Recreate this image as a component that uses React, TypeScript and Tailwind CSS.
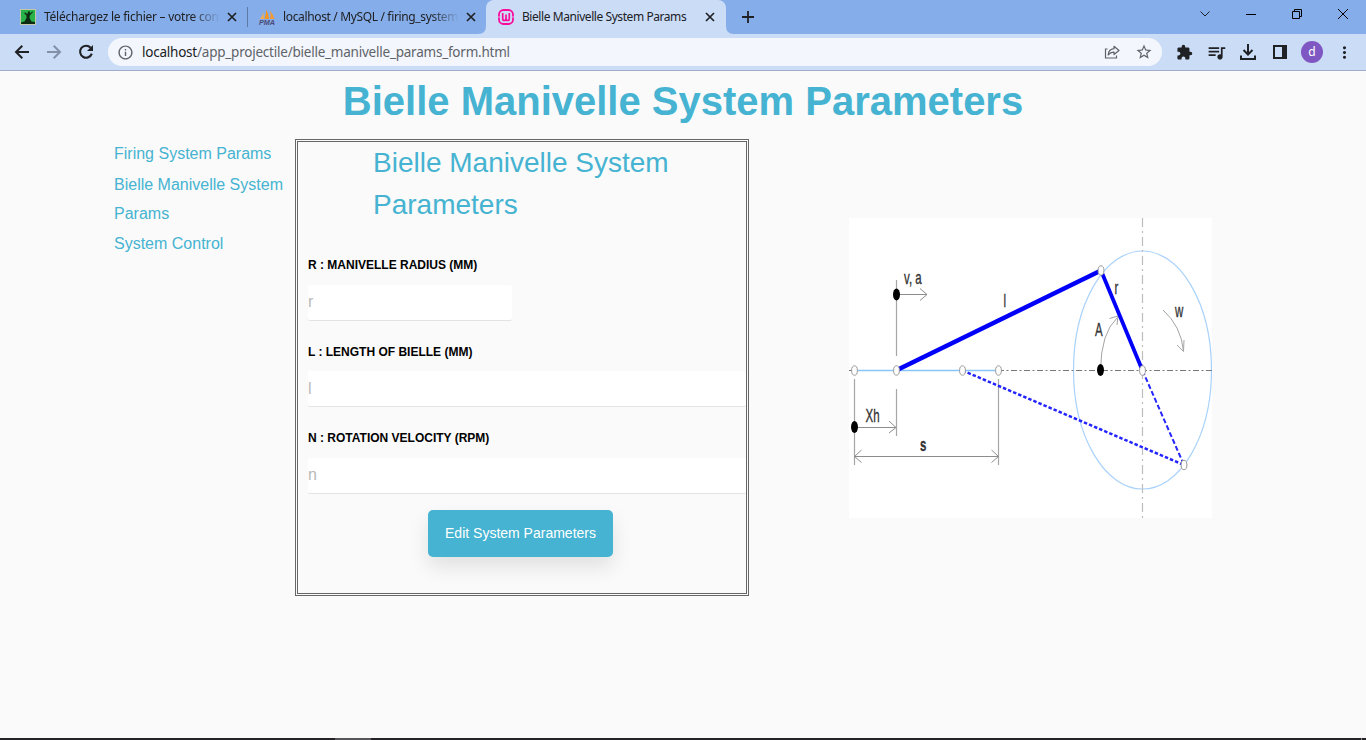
import type { ReactNode } from "react";
import { MdInfoOutline, MdStarBorder, MdExtension, MdQueueMusic, MdMoreVert } from "react-icons/md";

function CloseIcon({ className = "" }: { className?: string }) {
  return (
    <svg viewBox="0 0 10 10" className={`h-[10px] w-[10px] shrink-0 ${className}`}>
      <path d="M1 1L9 9M9 1L1 9" stroke="#202124" strokeWidth="1.7" />
    </svg>
  );
}

function PersonFavicon() {
  return (
    <svg viewBox="0 0 16 16" className="h-4 w-4 shrink-0">
      <rect width="16" height="16" fill="#c3c9a8" />
      <rect x="1" y="1" width="14" height="14" fill="#27b34a" />
      <path d="M4 4L5 3.500L7.500 5L8 2.500H10L9.800 4.500L12.500 2.500L13 3L9.800 6.500L9.500 9L11.500 12.500L15 13V15H1V13.500L4.500 12.500L6.500 9L6.500 6.500Z" fill="#0c2b12" />
    </svg>
  );
}

function PmaFavicon() {
  return (
    <svg viewBox="0 0 16 16" className="h-4 w-4 shrink-0">
      <path d="M1 10Q4 6 4.500 3L5 10Z" fill="#f3ab55" />
      <path d="M5.500 10Q7.500 5 7 0.500Q10 5 10 10Z" fill="#f7941d" />
      <path d="M11 10Q12 6 11 1.500Q14.500 6 15.500 10Z" fill="#f09a3c" />
      <text x="0" y="15.500" textLength="16" lengthAdjust="spacingAndGlyphs" fontFamily="Liberation Sans" fontSize="6.500" fontWeight="700" fontStyle="italic" fill="#4a4a78">
        PMA
      </text>
    </svg>
  );
}

function WampFavicon() {
  return (
    <svg viewBox="0 0 16 16" className="h-4 w-4 shrink-0" fill="none" stroke="#fb0a9b">
      <rect x="1" y="1" width="14" height="14" rx="4.500" strokeWidth="1.800" />
      <path d="M0 8H2.500M13.500 8H16" stroke="#cbdcf7" strokeWidth="0.800" />
      <path d="M4.700 4V9.500Q4.700 11.500 6.300 11.500Q8 11.500 8 9.500V5.500M8 9.500Q8 11.500 9.700 11.500Q11.300 11.500 11.300 9.500V4" strokeWidth="1.700" />
    </svg>
  );
}

function ShareIcon() {
  return (
    <svg viewBox="0 0 16 16" className="h-4 w-4" fill="none" stroke="#5f6368" strokeWidth="1.200">
      <path d="M3.500 5H1.500V14H12.500V11.500" />
      <path d="M10 2.300L15 6.500L10 10.500V8.200Q6.500 8 4.200 11Q4.500 5.300 10 4.700Z" strokeLinejoin="round" />
    </svg>
  );
}

function Cell({ children }: { children: ReactNode }) {
  return <div className="flex w-8 shrink-0 items-center justify-center">{children}</div>;
}

function TabStrip() {
  return (
    <div className="flex h-[34px] bg-[#85ade9] text-[12px] text-[#202124]">
      <div className="flex w-[248px] items-center pl-5">
        <PersonFavicon />
        <div className="ml-2 w-[176px] shrink-0 overflow-hidden whitespace-nowrap tracking-[-0.25px] [mask-image:linear-gradient(to_right,black_84%,transparent)]">
          Téléchargez le fichier – votre conv
        </div>
        <CloseIcon className="ml-[7px]" />
        <div className="ml-[10px] h-5 w-px shrink-0 bg-[#5d7ba9]" />
      </div>
      <div className="flex w-[238px] items-center pl-[11px]">
        <PmaFavicon />
        <div className="ml-2 w-[176px] overflow-hidden whitespace-nowrap tracking-[-0.35px] [mask-image:linear-gradient(to_right,black_84%,transparent)]">
          localhost / MySQL / firing_system
        </div>
        <CloseIcon className="ml-[7px]" />
      </div>
      <div className="relative flex w-[240px] items-center rounded-t-[8px] bg-[#cbdcf7] pl-3">
        <svg viewBox="0 0 8 8" className="absolute bottom-0 -left-2 h-2 w-2">
          <path d="M8 0V8H0Q8 8 8 0Z" fill="#cbdcf7" />
        </svg>
        <svg viewBox="0 0 8 8" className="absolute -right-2 bottom-0 h-2 w-2">
          <path d="M0 0V8H8Q0 8 0 0Z" fill="#cbdcf7" />
        </svg>
        <WampFavicon />
        <div className="ml-2 w-[176px] whitespace-nowrap tracking-[-0.43px]">Bielle Manivelle System Params</div>
        <CloseIcon className="ml-[7px]" />
      </div>
      <div className="flex grow items-center pl-4">
        <svg viewBox="0 0 12 12" className="h-3 w-3">
          <path d="M6 0V12M0 6H12" stroke="#202124" strokeWidth="1.800" />
        </svg>
      </div>
      <div className="flex h-7 items-center">
        <div className="flex w-[46px] justify-center">
          <svg viewBox="0 0 10 6" className="h-[6px] w-[10px]">
            <path d="M0.500 0.500L5 5L9.500 0.500" fill="none" stroke="#202124" />
          </svg>
        </div>
        <div className="flex w-[46px] justify-center">
          <div className="h-px w-[10px] bg-black" />
        </div>
        <div className="flex w-[46px] justify-center">
          <svg viewBox="0 0 10 10" className="h-[10px] w-[10px]" fill="none" stroke="#000">
            <path d="M0.500 2.500H7.500V9.500H0.500ZM2.500 2.500V0.500H9.500V7.500H7.500" />
          </svg>
        </div>
        <div className="flex w-[46px] justify-center">
          <svg viewBox="0 0 10 10" className="h-[10px] w-[10px]">
            <path d="M0 0L10 10M10 0L0 10" stroke="#000" />
          </svg>
        </div>
      </div>
    </div>
  );
}

function Toolbar() {
  return (
    <div className="flex h-[37px] border-b border-[#9fadc9] bg-[#cbdcf7] pl-[6px] text-[#202124]">
      <Cell>
        <svg viewBox="0 0 16 16" className="h-4 w-4" fill="none" stroke="#202124" strokeWidth="2">
          <path d="M15 8H2.500M8.300 1.700L2 8L8.300 14.300" />
        </svg>
      </Cell>
      <Cell>
        <svg viewBox="0 0 16 16" className="h-4 w-4" fill="none" stroke="#8290a8" strokeWidth="2">
          <path d="M1 8H13.500M7.700 1.700L14 8L7.700 14.300" />
        </svg>
      </Cell>
      <Cell>
        <svg viewBox="0 0 16 16" className="h-4 w-4" fill="none" stroke="#202124" strokeWidth="2.100">
          <path d="M12.600 3.700A6 6 0 1 0 13.800 9.600" />
          <path d="M15 1V7H9Z" fill="#202124" stroke="none" />
        </svg>
      </Cell>
      <div className="my-1 ml-[6px] flex h-7 w-[1054px] items-center rounded-full bg-[#f3f7fd] pl-[9px]">
        <MdInfoOutline size={17} className="text-[#5f6368]" />
        <div className="ml-2 grow whitespace-nowrap text-[13.5px] tracking-[-0.225px] text-[#5f6368]">
          <span className="text-[#202124]">localhost</span>/app_projectile/bielle_manivelle_params_form.html
        </div>
        <Cell><ShareIcon /></Cell>
        <Cell><MdStarBorder size={18} className="text-[#5f6368]" /></Cell>
        <div className="w-[2px]" />
      </div>
      <div className="ml-[6px] flex">
        <Cell><MdExtension size={17} /></Cell>
        <Cell><MdQueueMusic size={21} /></Cell>
        <Cell>
          <svg viewBox="0 0 16 16" className="h-4 w-4" fill="none" stroke="#202124" strokeWidth="2">
            <path d="M8 0V10M3.500 6L8 10.500L12.500 6M1 11.500V15H15V11.500" />
          </svg>
        </Cell>
        <Cell>
          <svg viewBox="0 0 14 14" className="h-[14px] w-[14px]">
            <path d="M0 0H14V14H0ZM2 2V12H9V2Z" fill="#202124" fillRule="evenodd" />
          </svg>
        </Cell>
        <Cell>
          <div className="flex h-[22px] w-[22px] items-center justify-center rounded-full bg-[#7e57c2] text-[12px] leading-none text-white">d</div>
        </Cell>
        <Cell><MdMoreVert size={19} /></Cell>
      </div>
    </div>
  );
}

const joints = [
  [854.5, 370.5],
  [896.5, 370.5],
  [962.5, 370.5],
  [998.5, 370.5],
  [1101, 270.5],
  [1142.5, 370.5],
  [1184, 465],
];

const labels: [string, number, number, number][] = [
  ["v, a", 904, 284, 400],
  ["l", 1003.5, 307, 400],
  ["r", 1114.5, 293.5, 400],
  ["A", 1095, 336, 400],
  ["w", 1175, 317, 400],
  ["Xh", 865.5, 422, 400],
  ["s", 920, 450.5, 700],
];

function CrankDiagram() {
  return (
    <svg viewBox="849 218 363 300" className="h-[300px] w-[363px] shrink-0 bg-white" fill="none">
      <ellipse cx="1142.500" cy="370" rx="69" ry="119" stroke="#a9d2fb" strokeWidth="1.200" />
      <path d="M1142.500 218V518" stroke="#bdbdbd" strokeWidth="1.200" strokeDasharray="9 4 2 4" />
      <path d="M998 370.500H1212" stroke="#777" strokeDasharray="6 2.500 2 2.500" />
      <path d="M849 370.500H854" stroke="#777" />
      <path d="M854 370.500H998" stroke="#86c5fa" strokeWidth="1.300" />
      <path d="M896.500 280V356M896.500 389V436M854.500 379V465M998.500 379V465" stroke="#a6a6a6" strokeWidth="1.200" />
      <path d="M897 294.500H927M855 427.500H896M854.500 456.500H998.500" stroke="#8d8d8d" strokeWidth="1.200" />
      <path d="M920 288.500L927 294.500L920 300.500M889 421L896 427.500L889 433M861.500 450L854.500 456.500L861.500 462.500M991.500 450L998.500 456.500L991.500 462.500" stroke="#909090" />
      <path d="M1100.500 370Q1101 333 1117 318M1109.500 318.500L1118 316L1117 325" stroke="#a3a3a3" />
      <path d="M1163 310Q1181 326 1183.500 351M1177 345L1183.500 351.500L1184 340" stroke="#a3a3a3" />
      <path d="M897 370L1101 270.500" stroke="#0000fa" strokeWidth="4.600" />
      <path d="M1101 270.500L1142.500 370.500" stroke="#0000fa" strokeWidth="3.800" />
      <path d="M962.500 370.500L1184 465" stroke="#2424ff" strokeWidth="2.500" strokeDasharray="3.500 2" />
      <path d="M1142.500 370.500L1184 465" stroke="#2424ff" strokeWidth="2" strokeDasharray="5 2.500" />
      {joints.map(([x, y]) => (
        <ellipse key={`${x}-${y}`} cx={x} cy={y} rx="2.900" ry="4.700" fill="#fff" stroke="#999" />
      ))}
      <ellipse cx="896.500" cy="294.500" rx="3.500" ry="6" fill="#000" />
      <ellipse cx="854.500" cy="427" rx="3.500" ry="6" fill="#000" />
      <ellipse cx="1100.500" cy="370" rx="3.500" ry="6" fill="#000" />
      {labels.map(([label, x, y, weight]) => (
        <text
          key={label}
          transform={`translate(${x} ${y}) scale(0.62 1)`}
          fontFamily="Liberation Sans"
          fontSize="18.5"
          fontWeight={weight}
          fill="#333"
          stroke="#333"
          strokeWidth="0.35"
        >
          {label}
        </text>
      ))}
    </svg>
  );
}

function Field({ label, placeholder, inputClass }: { label: string; placeholder: string; inputClass: string }) {
  return (
    <div className="h-[86.500px] pl-[10px]">
      <label className="block h-[28.900px] text-[12px] leading-[18px] font-bold whitespace-nowrap text-black uppercase">{label}</label>
      <input
        placeholder={placeholder}
        className={`block h-[36px] rounded-[2px] border-b border-[#e3e3e3] bg-white text-[16px] outline-none placeholder:text-[#b9b9b9] ${inputClass}`}
      />
    </div>
  );
}

export default function App() {
  return (
    <div className="flex h-[740px] w-[1366px] flex-col overflow-hidden bg-[#fafafa]">
      <header className="font-['Noto_Sans','Open_Sans',sans-serif]">
        <TabStrip />
        <Toolbar />
      </header>
      <main className="grow font-['Liberation_Sans',Arial,sans-serif] text-[#45b3d1]">
        <h1 className="h-[68px] pt-[6px] text-center text-[40px] leading-[48px] font-bold">Bielle Manivelle System Parameters</h1>
        <div className="flex items-start">
          <nav className="ml-[114px] w-[181px] text-[16px] leading-[29.500px]">
            <a className="block">Firing System Params</a>
            <a className="mt-[1px] block">Bielle Manivelle System Params</a>
            <a className="block">System Control</a>
          </nav>
          <section className="h-[457px] w-[454px] overflow-hidden border-[3px] border-double border-[#666]">
            <h2 className="h-[114px] pl-[75px] text-[28px] leading-[42px]">
              Bielle Manivelle System
              <br />
              Parameters
            </h2>
            <Field label="R : Manivelle radius (mm)" placeholder="r" inputClass="w-[204px]" />
            <Field label="L : Length of bielle (mm)" placeholder="l" inputClass="w-[438px]" />
            <Field label="N : Rotation velocity (rpm)" placeholder="n" inputClass="w-[438px]" />
            <button className="mt-[-6px] ml-[130px] block h-[47px] w-[185px] rounded-[5px] bg-[#45b3d1] text-[14px] text-white shadow-[0_10px_20px_rgba(0,0,0,0.1)]">
              Edit System Parameters
            </button>
          </section>
          <div className="mt-[79px] ml-[100px]">
            <CrankDiagram />
          </div>
        </div>
      </main>
      <footer className="flex h-[2px] bg-[#242226]">
        <div className="ml-[335px] h-full w-9 bg-[#55555a]" />
        <div className="mr-[4px] ml-auto h-full w-px bg-[#888]" />
      </footer>
    </div>
  );
}
